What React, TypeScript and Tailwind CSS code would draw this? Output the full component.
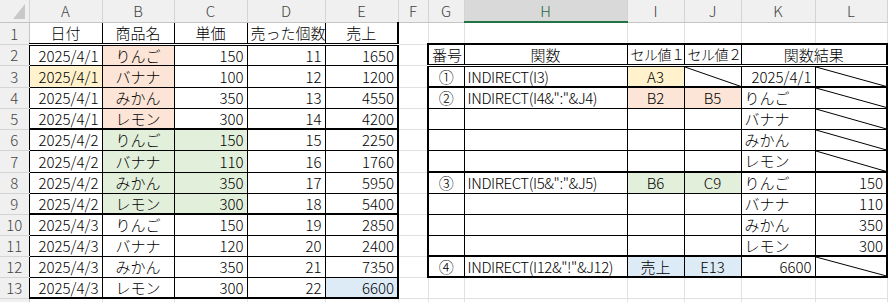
import React from "react";

type Align = "l" | "c" | "r";
type Fill = "yellow" | "orange" | "green" | "blue";

interface CellSpec {
  v?: string;
  al?: Align;
  bg?: Fill;
  diag?: boolean;
  span?: number;
  small?: boolean;
  tight?: boolean;
}

const COLS = ["", "A", "B", "C", "D", "E", "F", "G", "H", "I", "J", "K", "L", "M"];
const colWidths = [
  "w-[29px]",
  "w-[73px]",
  "w-[72px]",
  "w-[73px]",
  "w-[78px]",
  "w-[73px]",
  "w-[30px]",
  "w-[36px]",
  "w-[163px]",
  "w-[57px]",
  "w-[57px]",
  "w-[74px]",
  "w-[72px]",
  "w-[60px]",
];
// row 0 is the column header row
const rowHeights = [
  "h-[22px]",
  "h-[22px]",
  "h-[21px]",
  "h-[22px]",
  "h-[21px]",
  "h-[21px]",
  "h-[21px]",
  "h-[22px]",
  "h-[21px]",
  "h-[21px]",
  "h-[21px]",
  "h-[21px]",
  "h-[21px]",
  "h-[21px]",
  "h-[21px]",
];

const alignCls: Record<Align, string> = {
  l: "text-left",
  c: "text-center",
  r: "text-right",
};

const fillCls: Record<Fill, string> = {
  yellow: "bg-[#fff2cc]",
  orange: "bg-[#fce4d6]",
  green: "bg-[#e2efda]",
  blue: "bg-[#ddebf7]",
};

const R = {
  grid: "border-r border-r-[#e1e1e1]",
  thin: "border-r border-r-black",
  thick: "border-r-2 border-r-black",
  head: "border-r border-r-[#d4d4d4]",
  rowHead: "border-r border-r-[#c4c4c4]",
};
const B = {
  grid: "border-b border-b-[#e1e1e1]",
  thin: "border-b border-b-black",
  thick: "border-b-2 border-b-black",
  dbl: "border-b-[3px] [border-bottom-style:double]! border-b-black",
  head: "border-b border-b-[#c4c4c4]",
  sel: "border-b-2 border-b-[#217346]",
  rowHead: "border-b border-b-[#d4d4d4]",
};

// sales table A1:E13
const sales: [string, string, string, string, string][] = [
  ["2025/4/1", "りんご", "150", "11", "1650"],
  ["2025/4/1", "バナナ", "100", "12", "1200"],
  ["2025/4/1", "みかん", "350", "13", "4550"],
  ["2025/4/1", "レモン", "300", "14", "4200"],
  ["2025/4/2", "りんご", "150", "15", "2250"],
  ["2025/4/2", "バナナ", "110", "16", "1760"],
  ["2025/4/2", "みかん", "350", "17", "5950"],
  ["2025/4/2", "レモン", "300", "18", "5400"],
  ["2025/4/3", "りんご", "150", "19", "2850"],
  ["2025/4/3", "バナナ", "120", "20", "2400"],
  ["2025/4/3", "みかん", "350", "21", "7350"],
  ["2025/4/3", "レモン", "300", "22", "6600"],
];

const cells: Record<string, CellSpec> = {
  A1: { v: "日付", al: "c" },
  B1: { v: "商品名", al: "c" },
  C1: { v: "単価", al: "c" },
  D1: { v: "売った個数", al: "c" },
  E1: { v: "売上", al: "c" },

  G2: { v: "番号", al: "c" },
  H2: { v: "関数", al: "c" },
  I2: { v: "セル値１", al: "c", small: true },
  J2: { v: "セル値２", al: "c", small: true },
  K2: { v: "関数結果", al: "c", span: 2 },

  G3: { v: "①", al: "c" },
  H3: { v: "INDIRECT(I3)", al: "l", tight: true },
  I3: { v: "A3", al: "c", bg: "yellow" },
  J3: { diag: true },
  K3: { v: "2025/4/1", al: "r" },
  L3: { diag: true },

  G4: { v: "②", al: "c" },
  H4: { v: 'INDIRECT(I4&":"&J4)', al: "l", tight: true },
  I4: { v: "B2", al: "c", bg: "orange" },
  J4: { v: "B5", al: "c", bg: "orange" },
  K4: { v: "りんご", al: "l" },
  L4: { diag: true },
  K5: { v: "バナナ", al: "l" },
  L5: { diag: true },
  K6: { v: "みかん", al: "l" },
  L6: { diag: true },
  K7: { v: "レモン", al: "l" },
  L7: { diag: true },

  G8: { v: "③", al: "c" },
  H8: { v: 'INDIRECT(I5&":"&J5)', al: "l", tight: true },
  I8: { v: "B6", al: "c", bg: "green" },
  J8: { v: "C9", al: "c", bg: "green" },
  K8: { v: "りんご", al: "l" },
  L8: { v: "150", al: "r" },
  K9: { v: "バナナ", al: "l" },
  L9: { v: "110", al: "r" },
  K10: { v: "みかん", al: "l" },
  L10: { v: "350", al: "r" },
  K11: { v: "レモン", al: "l" },
  L11: { v: "300", al: "r" },

  G12: { v: "④", al: "c" },
  H12: { v: 'INDIRECT(I12&"!"&J12)', al: "l", tight: true },
  I12: { v: "売上", al: "c", bg: "blue" },
  J12: { v: "E13", al: "c", bg: "blue" },
  K12: { v: "6600", al: "r" },
  L12: { diag: true },
};

sales.forEach((s, i) => {
  const r = i + 2;
  const fruitBg: Fill | undefined = r <= 5 ? "orange" : r <= 9 ? "green" : undefined;
  cells[`A${r}`] = { v: s[0], al: "r", bg: r === 3 ? "yellow" : undefined };
  cells[`B${r}`] = { v: s[1], al: "c", bg: fruitBg };
  cells[`C${r}`] = { v: s[2], al: "r", bg: r >= 6 && r <= 9 ? "green" : undefined };
  cells[`D${r}`] = { v: s[3], al: "r" };
  cells[`E${r}`] = { v: s[4], al: "r", bg: r === 13 ? "blue" : undefined };
});

// right edge of cell at (row, col)
function rightEdge(r: number, c: number) {
  if (c === 0) return r >= 2 && r <= 13 ? R.thin : R.rowHead;
  if (r >= 1 && r <= 13 && c >= 1 && c <= 5) return c === 5 ? R.thick : R.thin;
  if (r >= 2 && r <= 12) {
    if (c === 6 || c === 12) return R.thick;
    if (c >= 7 && c <= 11) return R.thin;
  }
  return R.grid;
}

// bottom edge of cell at (row, col)
function bottomEdge(r: number, c: number) {
  if (c === 0) return B.rowHead;
  if (c >= 1 && c <= 5 && r >= 1 && r <= 13) {
    if (r === 1) return B.dbl;
    if (r === 5 || r === 9 || r === 13) return B.thick;
    return B.thin;
  }
  if (c >= 7 && c <= 12 && r >= 1 && r <= 12) {
    if (r === 2) return B.dbl;
    if (r === 1 || r === 3 || r === 7 || r === 11 || r === 12) return B.thick;
    return B.thin;
  }
  return B.grid;
}

function Diagonal() {
  return (
    <svg className="absolute inset-0 h-full w-full" preserveAspectRatio="none" viewBox="0 0 100 100">
      <line x1="0" y1="0" x2="100" y2="100" stroke="#000" strokeWidth="1" vectorEffect="non-scaling-stroke" />
    </svg>
  );
}

function HeaderRow() {
  return (
    <tr className={rowHeights[0]}>
      {COLS.map((name, c) => {
        const selected = name === "H";
        return (
          <th
            key={c}
            className={`relative p-0 text-center align-middle font-light ${
              selected ? "bg-[#d9d9d9] text-[#1e6b41]" : "bg-[#f0f0f0] text-[#444]"
            } ${R.head} ${selected ? B.sel : B.head}`}
          >
            {c === 0 ? (
              <svg className="absolute right-[4px] bottom-[3px] h-[15px] w-[12px]" viewBox="0 0 12 15">
                <polygon points="12,0 12,15 0,15" fill="#c8c8c8" />
              </svg>
            ) : name === "M" ? (
              ""
            ) : (
              name
            )}
          </th>
        );
      })}
    </tr>
  );
}

function SheetRow({ r }: { r: number }) {
  const tds: React.ReactNode[] = [];
  tds.push(
    <td key={0} className={`bg-[#f0f0f0] p-0 text-center text-[#444] ${rightEdge(r, 0)} ${B.rowHead}`}>
      {r <= 13 ? r : ""}
    </td>
  );
  for (let c = 1; c < COLS.length; c++) {
    const spec = cells[`${COLS[c]}${r}`] ?? {};
    const span = spec.span ?? 1;
    const lastCol = c + span - 1;
    tds.push(
      <td
        key={c}
        colSpan={span}
        className={`relative overflow-hidden whitespace-nowrap px-[3px] py-0 align-middle ${
          alignCls[spec.al ?? "l"]
        } ${spec.bg ? fillCls[spec.bg] : ""} ${spec.small ? "text-[14px] tracking-[-0.5px]" : ""} ${
          spec.tight ? "tracking-[-0.4px]" : ""
        } ${rightEdge(r, lastCol)} ${bottomEdge(r, c)}`}
      >
        {spec.diag && <Diagonal />}
        {spec.v}
      </td>
    );
    c = lastCol;
  }
  return <tr className={rowHeights[r]}>{tds}</tr>;
}

export default function App() {
  const rows = Array.from({ length: 14 }, (_, i) => i + 1);
  return (
    <div className="h-[302px] w-[888px] overflow-hidden bg-white">
      <table
        className="w-[947px] table-fixed border-collapse text-[15px] font-light leading-none text-black"
        style={{ fontFamily: '"Noto Sans CJK JP", "Noto Sans", sans-serif' }}
      >
        <colgroup>
          {colWidths.map((w, i) => (
            <col key={i} className={w} />
          ))}
        </colgroup>
        <thead>
          <HeaderRow />
        </thead>
        <tbody>
          {rows.map((r) => (
            <SheetRow key={r} r={r} />
          ))}
        </tbody>
      </table>
    </div>
  );
}
